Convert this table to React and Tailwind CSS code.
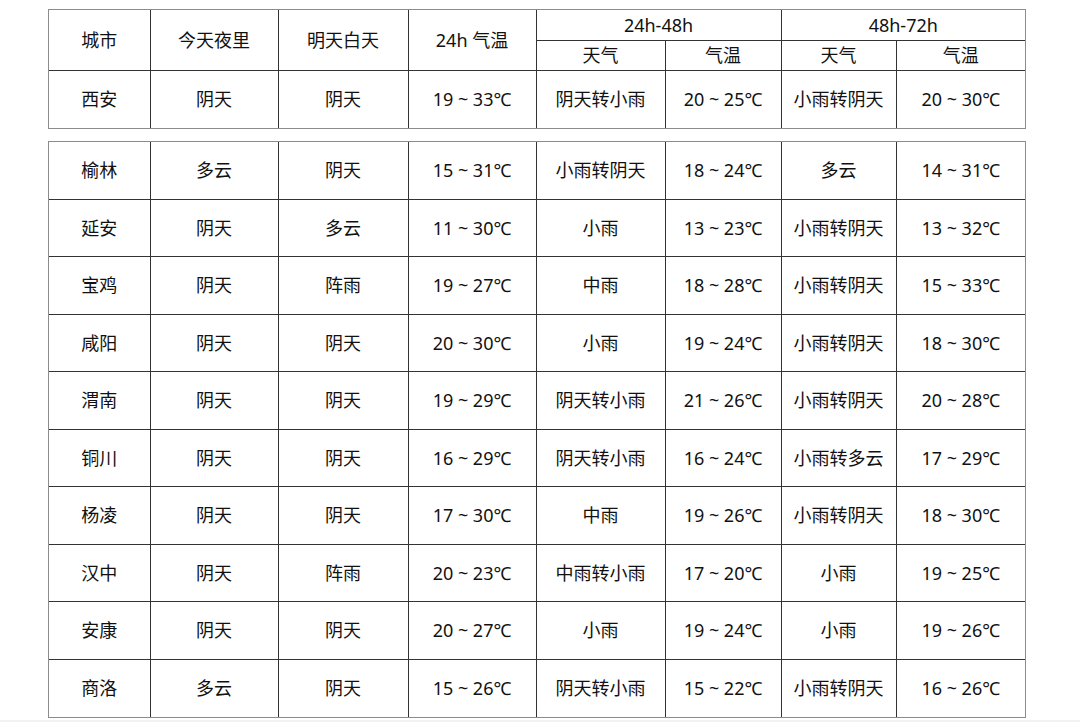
import React from 'react';

const rows = [
  ['榆林', '多云', '阴天', '15 ~ 31℃', '小雨转阴天', '18 ~ 24℃', '多云', '14 ~ 31℃'],
  ['延安', '阴天', '多云', '11 ~ 30℃', '小雨', '13 ~ 23℃', '小雨转阴天', '13 ~ 32℃'],
  ['宝鸡', '阴天', '阵雨', '19 ~ 27℃', '中雨', '18 ~ 28℃', '小雨转阴天', '15 ~ 33℃'],
  ['咸阳', '阴天', '阴天', '20 ~ 30℃', '小雨', '19 ~ 24℃', '小雨转阴天', '18 ~ 30℃'],
  ['渭南', '阴天', '阴天', '19 ~ 29℃', '阴天转小雨', '21 ~ 26℃', '小雨转阴天', '20 ~ 28℃'],
  ['铜川', '阴天', '阴天', '16 ~ 29℃', '阴天转小雨', '16 ~ 24℃', '小雨转多云', '17 ~ 29℃'],
  ['杨凌', '阴天', '阴天', '17 ~ 30℃', '中雨', '19 ~ 26℃', '小雨转阴天', '18 ~ 30℃'],
  ['汉中', '阴天', '阵雨', '20 ~ 23℃', '中雨转小雨', '17 ~ 20℃', '小雨', '19 ~ 25℃'],
  ['安康', '阴天', '阴天', '20 ~ 27℃', '小雨', '19 ~ 24℃', '小雨', '19 ~ 26℃'],
  ['商洛', '多云', '阴天', '15 ~ 26℃', '阴天转小雨', '15 ~ 22℃', '小雨转阴天', '16 ~ 26℃'],
];

const xian = ['西安', '阴天', '阴天', '19 ~ 33℃', '阴天转小雨', '20 ~ 25℃', '小雨转阴天', '20 ~ 30℃'];

// column widths inside the 1px outer frame (976px total)
const widths = [101, 128, 130, 128, 129, 116, 115, 129];

const cell = 'border-r border-b border-[#333] last:border-r-0 text-center align-middle p-0';

const Cols = () => (
  <colgroup>
    {widths.map((w, i) => (
      <col key={i} style={{ width: w }} />
    ))}
  </colgroup>
);

const Row = ({ data }) => (
  <tr className="h-[57.5px]">
    {data.map((v, i) => (
      <td key={i} className={cell}>{v}</td>
    ))}
  </tr>
);

export default function App() {
  return (
    <div
      className="w-[1080px] h-[722px] bg-white text-[#111] text-[18px] leading-none overflow-hidden"
      style={{ fontFamily: '"Noto Sans", "Noto Sans CJK SC", sans-serif' }}
    >
      <div className="pl-[48px] pt-[9px]">
        <div className="w-[978px] border border-[#8c8c8c]">
          <table className="w-full table-fixed border-collapse [&_tr:last-child>td]:border-b-0">
            <Cols />
            <tbody>
              <tr className="h-[30px]">
                <td rowSpan={2} className={cell}>城市</td>
                <td rowSpan={2} className={cell}>今天夜里</td>
                <td rowSpan={2} className={cell}>明天白天</td>
                <td rowSpan={2} className={cell}>24h 气温</td>
                <td colSpan={2} className={cell}>24h-48h</td>
                <td colSpan={2} className={cell}>48h-72h</td>
              </tr>
              <tr className="h-[30px]">
                <td className={cell}>天气</td>
                <td className={cell}>气温</td>
                <td className={cell}>天气</td>
                <td className={cell}>气温</td>
              </tr>
              <Row data={xian} />
            </tbody>
          </table>
        </div>

        <div className="w-[978px] mt-[12px] border border-[#8c8c8c]">
          <table className="w-full table-fixed border-collapse [&_tr:last-child>td]:border-b-0">
            <Cols />
            <tbody>
              {rows.map((r) => (
                <Row key={r[0]} data={r} />
              ))}
            </tbody>
          </table>
        </div>
      </div>
      <div className="mt-[2px] h-[10px] bg-[#f2f2f2]" />
    </div>
  );
}
